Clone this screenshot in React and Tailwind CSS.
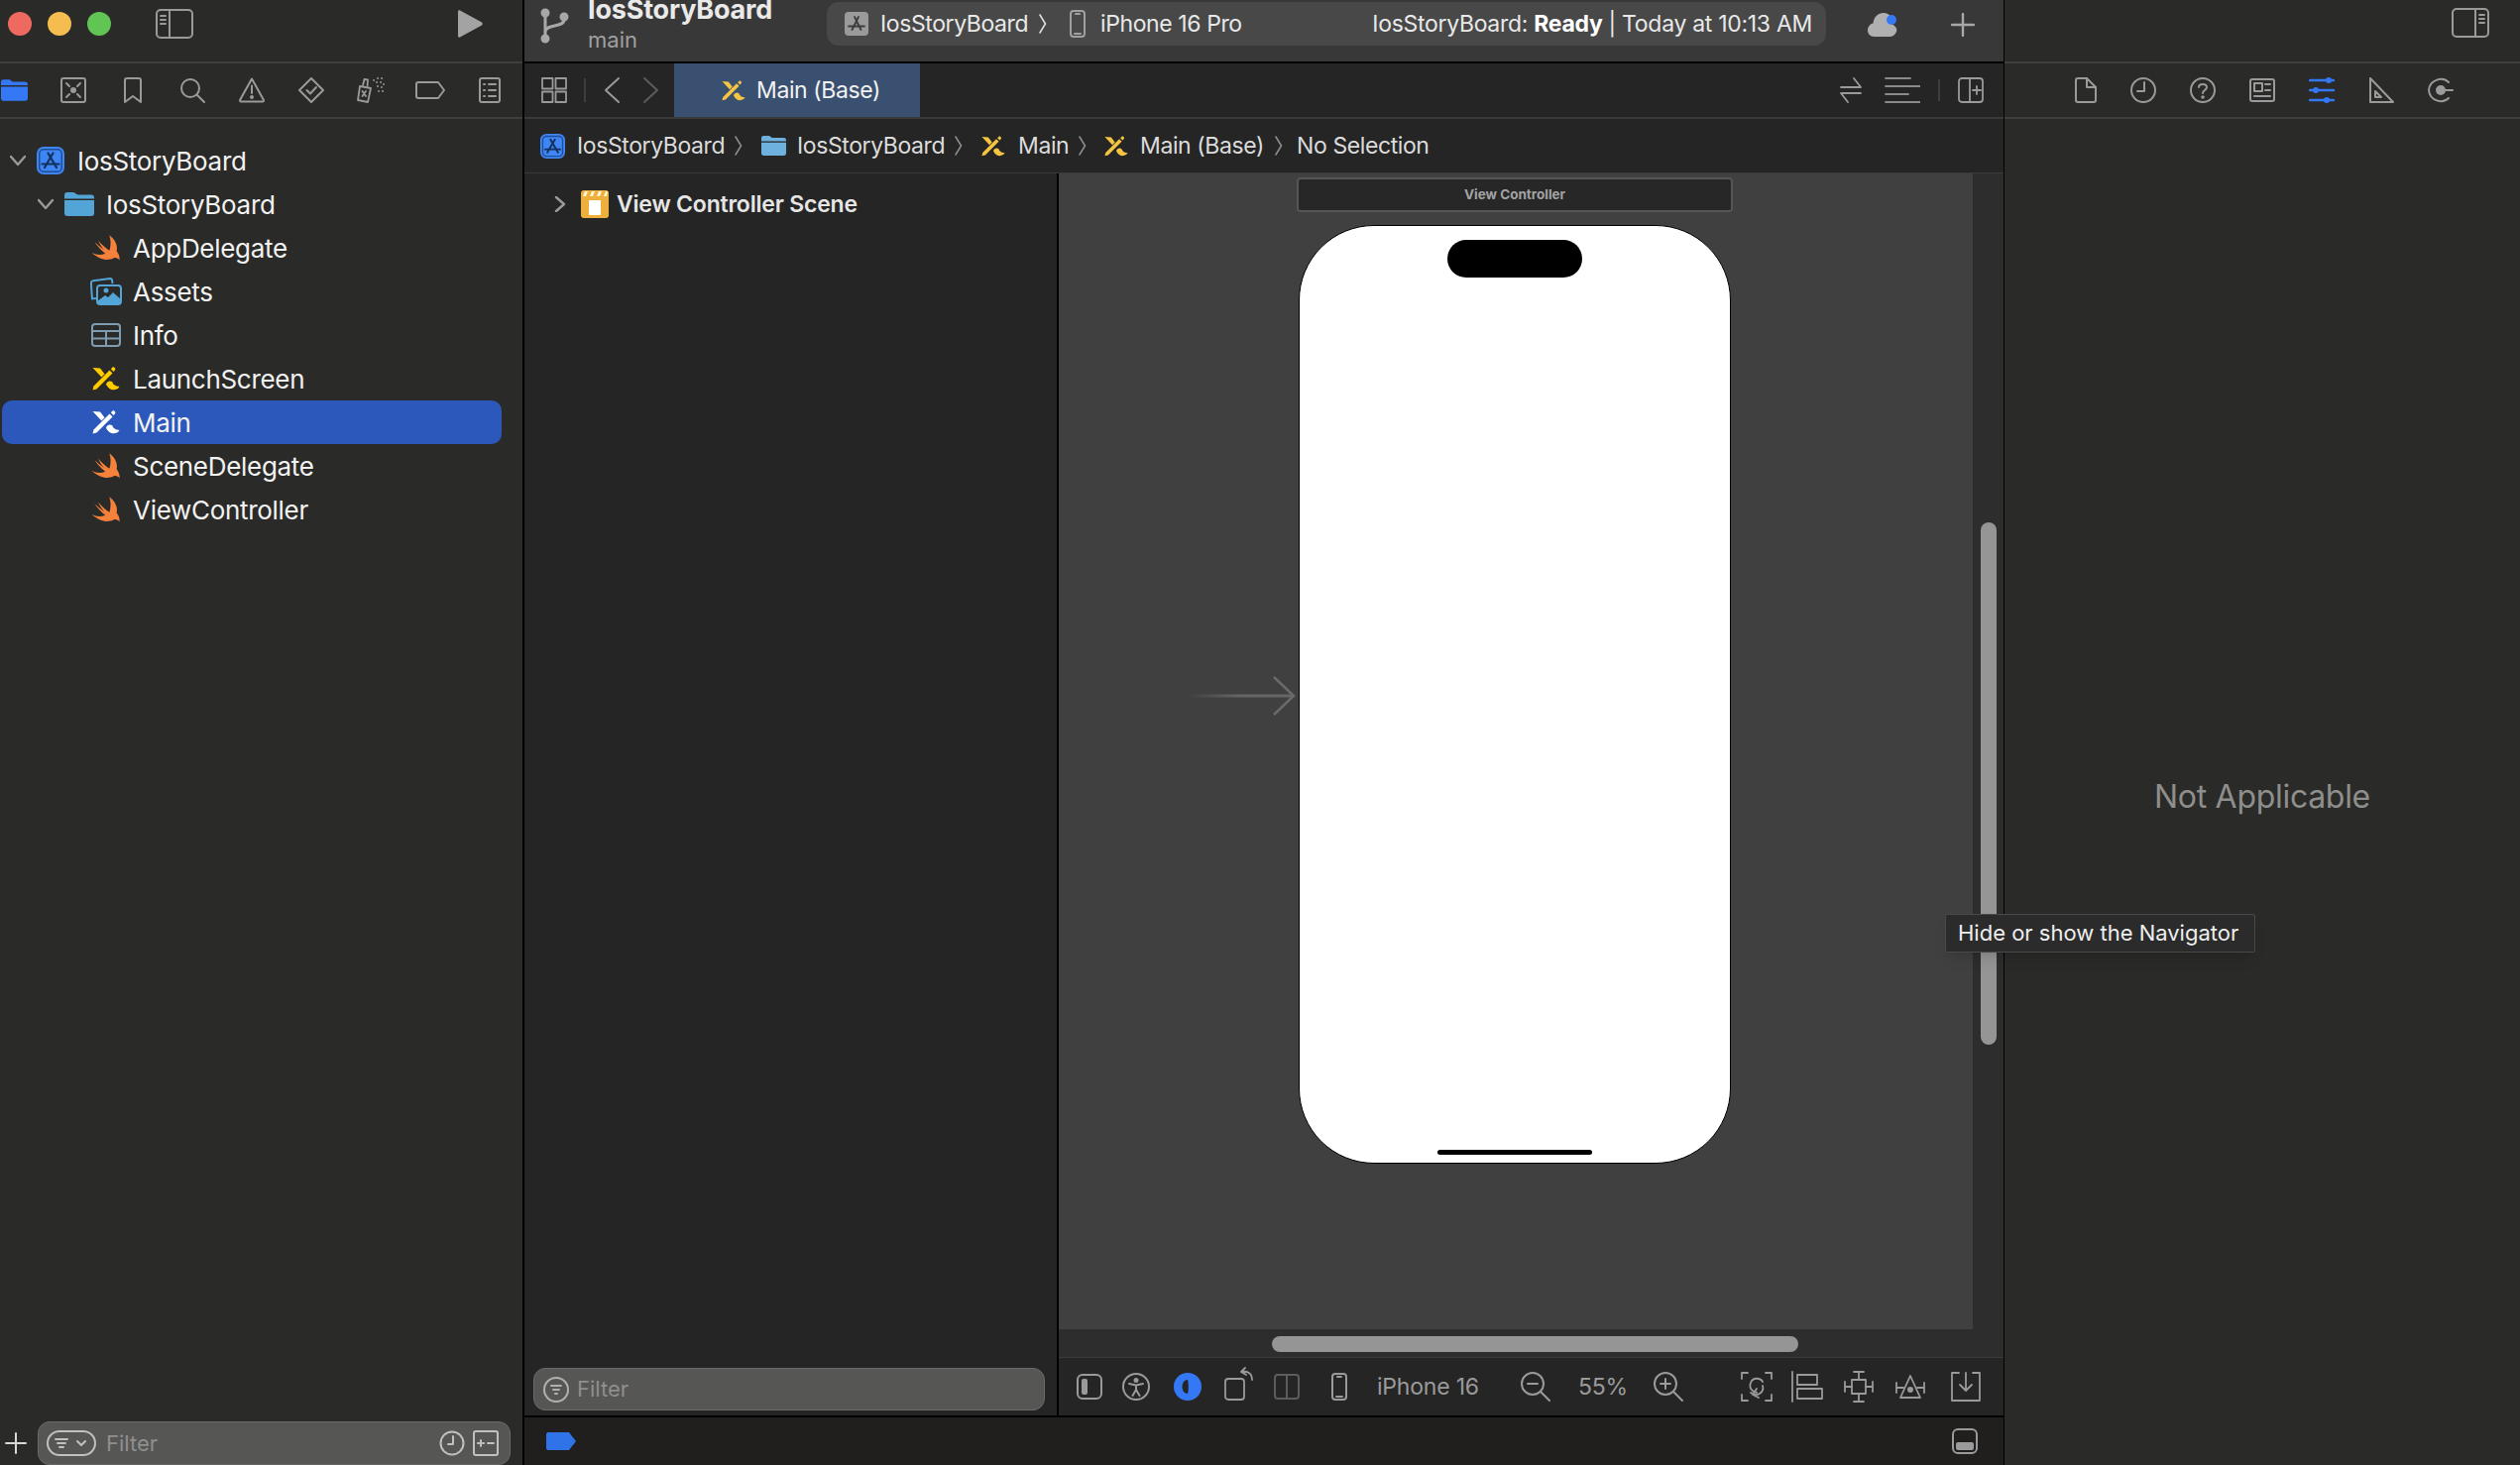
import React from 'react';

// Generic outline icon: drawn in real pixels, so viewBox equals the size
function Ic({ w = 28, h = 28, sw = 2, className = '', children }) {
  return (
    <svg width={w} height={h} viewBox={`0 0 ${w} ${h}`} fill="none" stroke="currentColor" strokeWidth={sw} strokeLinecap="round" strokeLinejoin="round" className={`shrink-0 ${className || 'text-[#9a9a9a]'}`}>
      {children}
    </svg>
  );
}

function Swift() {
  return (
    <svg width="30" height="26" viewBox="0 0 25 22" className="shrink-0" fill="#f5813a">
      <path d="M15.2 0.3C20.4 4 22.6 9.4 21.5 13.8C23.4 16.400 24.400 19 23.900 21.500C22.600 19.800 20.600 19 18.800 19.900C13.600 22.400 7 21.200 0.300 15.200C4 17 8.200 17.500 11.800 15.800C8 13 4.800 9.400 2.600 6C5.800 9 8.800 11.400 11 12.800C9 10.600 7.200 8 5.600 4.600C9 8.400 12.600 11.600 15.400 13.400C16.600 9.600 16.800 4.800 15.2 0.3Z" />
    </svg>
  );
}

function Storyboard({ color = '#ffcc00', w = 28, h = 24 }) {
  return (
    <svg width={w} height={h} viewBox="0 0 28 24" className="shrink-0" fill={color}>
      <path d="M0.500 1L8 1.500L12.500 7.300L9.400 10.600Z" />
      <path d="M0.500 23.500L1.500 19.500L17.500 3.500L20.500 6.500L4.500 22.500Z" />
      <path d="M18.800 2.300L20.300 0.800C21 0.200 21.800 0.200 22.400 0.800L22.900 1.300C23.500 1.900 23.500 2.700 22.900 3.400L21.500 4.900Z" />
      <path d="M14 17.500C15 14.500 18 13.500 20.300 15.300C21 18 24 20 27.500 20C25 24.500 17 25 14 17.500Z" />
    </svg>
  );
}

function AppIcon({ size = 28 }) {
  return (
    <svg width={size} height={size} viewBox="0 0 28 28" className="shrink-0" fill="none">
      <rect x="1" y="1" width="26" height="26" rx="6" fill="#1f4d96" stroke="#3f86f5" strokeWidth="2" />
      <rect x="3.500" y="3.500" width="21" height="21" rx="3.500" fill="#3f86f5" />
      <path d="M11.500 6.500L20 21M16.500 6.500L8 21M5.500 17.500H22.500" stroke="#14305f" strokeWidth="2.200" strokeLinecap="round" />
    </svg>
  );
}

function Folder({ w = 30, h = 24, color = '#52a5d6' }) {
  return (
    <svg width={w} height={h} viewBox="0 0 30 24" className="shrink-0" fill={color}>
      <path d="M0 3C0 1 1 0 3 0H9C11 0 11.500 2.500 14 2.500H27C29 2.500 30 3.500 30 5.500V6.500H0Z" />
      <path d="M0 8H30V21C30 23 29 24 27 24H3C1 24 0 23 0 21Z" />
    </svg>
  );
}

function Chevron({ dir = 'down' }) {
  return (
    <Ic w={16} h={16} sw={2.400}>
      {dir === 'down' ? <path d="M1 4L8 12L15 4" /> : <path d="M4 1L12 8L4 15" />}
    </Ic>
  );
}

function Crumb({ color = '#8c8c8c' }) {
  return (
    <svg width="8" height="20" viewBox="0 0 8 20" fill="none" stroke={color} strokeWidth="1.600" strokeLinecap="round" className="shrink-0">
      <path d="M1 1L6.500 10L1 19" />
    </svg>
  );
}

const files = [
  { name: 'AppDelegate', icon: <Swift /> },
  {
    name: 'Assets',
    icon: (
      <svg width="32" height="28" viewBox="0 0 32 28" className="shrink-0 -ml-[1px]" fill="none" stroke="#52a5d6" strokeWidth="2">
        <path d="M6 21L2 21.500C1.500 15 1 10 1 5C1 4 2 3.400 3 3.200L20 1C21.500 1 22 2 22 3L22.600 6" />
        <rect x="7" y="8" width="24" height="19" rx="3" />
        <circle cx="16" cy="13" r="2.500" fill="#52a5d6" stroke="none" />
        <path d="M7 24L15 18L18 20L23 15L31 22V25C31 26 30 27 29 27H10C8 27 7 26 7 24Z" fill="#52a5d6" stroke="none" />
      </svg>
    ),
  },
  {
    name: 'Info',
    icon: (
      <svg width="30" height="24" viewBox="0 0 30 24" className="shrink-0" fill="none" stroke="#7f9bb0" strokeWidth="2">
        <rect x="1" y="1" width="28" height="22" rx="3" />
        <path d="M1 8H29M1 15.500H29M15 8V23" />
      </svg>
    ),
  },
  { name: 'LaunchScreen', icon: <Storyboard /> },
  { name: 'Main', icon: <Storyboard color="#ffffff" />, selected: true },
  { name: 'SceneDelegate', icon: <Swift /> },
  { name: 'ViewController', icon: <Swift /> },
];

function Filter({ children, className }) {
  return <div className={`bg-[#565654] border border-[#6a6a68] flex items-center ${className}`}>{children}</div>;
}

const navIcons = [
  <Folder w={27} h={22} color="#3478f6" />,
  <Ic w={26} h={26}>
    <rect x="1" y="1" width="24" height="24" rx="2" />
    <circle cx="13" cy="13" r="3" fill="currentColor" stroke="none" />
    <path d="M6 6L9 9M20 6L17 9M6 20L9 17M20 20L17 17" />
  </Ic>,
  <Ic w={20} h={26}>
    <path d="M2 3C2 2 3 1 4 1H16C17 1 18 2 18 3V25L10 19L2 25Z" />
  </Ic>,
  <Ic w={26} h={26}>
    <circle cx="11" cy="11" r="9" />
    <path d="M17.500 17.500L25 25" />
  </Ic>,
  <Ic w={26} h={26}>
    <path d="M13 1.500L25 23C25 24 24.500 24.500 24 24.500H2C1.500 24.500 1 24 1 23Z" />
    <path d="M13 8.500V16" />
    <circle cx="13" cy="20" r="1" fill="currentColor" />
  </Ic>,
  <Ic w={28} h={28}>
    <path d="M14 2L26 14L14 26L2 14Z" />
    <path d="M9.500 14L13 17.500L19 11" />
  </Ic>,
  <Ic w={30} h={28} sw={1.800}>
    <path d="M4 10L15 12L12 26L2 24Z" />
    <path d="M7 9L8.500 3L12 3.500L11.500 10" />
    <path d="M6.500 15L10 20M10 15L6.500 20" />
    <path d="M18 4H18.100M22 2H22.100M26 2H26.100M21 6H21.100M25 6H25.100M28 8H28.100M22 10H22.100M26 11H26.100M23 15H23.100M27 15H27.100" />
  </Ic>,
  <Ic w={30} h={20}>
    <path d="M3 2H23L29 10L23 18H3C2 18 1 17 1 16V4C1 3 2 2 3 2Z" />
  </Ic>,
  <Ic w={22} h={26}>
    <rect x="1" y="1" width="20" height="24" rx="2" />
    <path d="M5 7H6M10 7H17M5 13H6M10 13H17M5 19H6M10 19H17" />
  </Ic>,
];

export default function App() {
  return (
    <div className="relative w-[2542px] h-[1478px] overflow-hidden flex bg-black font-[Inter,sans-serif] text-[25px] text-[#e6e6e6]">
      {/* Navigator */}
      <div className="w-[527px] shrink-0 mr-[2px] bg-[#2a2a28] flex flex-col">
        <div className="h-[62px] flex items-center pl-[8px] pr-[40px] shrink-0">
          <div className="flex gap-[16px]">
            <div className="w-6 h-6 rounded-full bg-[#ee6a5f] -mt-[14px]" />
            <div className="w-6 h-6 rounded-full bg-[#f5bd4f] -mt-[14px]" />
            <div className="w-6 h-6 rounded-full bg-[#61c554] -mt-[14px]" />
          </div>
          <div className="ml-[45px] -mt-[15px]">
            <Ic w={38} h={30}>
              <rect x="1" y="1" width="36" height="28" rx="4" />
              <path d="M14 1V29M5 7H10M5 11H10M5 15H10" />
            </Ic>
          </div>
          <svg width="26" height="28" viewBox="0 0 26 28" fill="#a3a3a3" className="ml-auto -mt-[14px]">
            <path d="M1 1.500C1 0.500 2 0 3 0.500L25 12.500C26 13.500 26 14.500 25 15.500L3 27.500C2 28 1 27.500 1 26.500Z" />
          </svg>
        </div>
        <div className="h-[2px] bg-[#3f3f3d] shrink-0" />
        <div className="h-[54px] flex items-center -ml-[16px] shrink-0">
          {navIcons.map((icon, i) => (
            <div key={i} className="w-[60px] flex justify-center shrink-0">{icon}</div>
          ))}
        </div>
        <div className="h-[2px] bg-[#3f3f3d] shrink-0" />
        <div className="flex-1 pt-[20px] text-[#f2f2f2] text-[26px] tracking-[-0.3px]">
          <div className="h-[44px] flex items-center pl-[10px]">
            <Chevron />
            <div className="ml-[11px] mr-[13px]"><AppIcon /></div>
            IosStoryBoard
          </div>
          <div className="h-[44px] flex items-center pl-[38px]">
            <Chevron />
            <div className="ml-[11px] mr-[12px]"><Folder /></div>
            IosStoryBoard
          </div>
          {files.map((f) => (
            <div key={f.name} className={`h-[44px] flex items-center pl-[90px] w-[504px] ml-[2px] rounded-[10px] ${f.selected ? 'bg-[#2c58bb]' : ''}`}>
              <div className="w-[30px] mr-[12px] flex justify-center">{f.icon}</div>
              {f.name}
            </div>
          ))}
        </div>
        <div className="h-[44px] flex items-center shrink-0">
          <Ic w={22} h={22} className="text-[#d8d8d8] ml-[5px]">
            <path d="M11 1V21M1 11H21" />
          </Ic>
          <Filter className="ml-[11px] w-[477px] h-[44px] rounded-[12px] text-[22px]">
            <div className="ml-[8px]">
              <Ic w={52} h={26} className="text-[#c0c0c0]">
                <rect x="1" y="1" width="48" height="24" rx="12" />
                <path d="M9 9H21M11 13H19M13 17H17M31 11L35 15L39 11" />
              </Ic>
            </div>
            <span className="ml-[8px] text-[#8f8f8d]">Filter</span>
            <div className="ml-auto mr-[11px] flex gap-[8px] items-center">
              <Ic w={26} h={26} className="text-[#c0c0c0]">
                <circle cx="13" cy="13" r="11.500" />
                <path d="M14 6V14H9" />
              </Ic>
              <Ic w={26} h={26} className="text-[#c0c0c0]">
                <rect x="1" y="1" width="24" height="24" rx="2" />
                <path d="M5 13H11M8 10V16M15 13H21" />
              </Ic>
            </div>
          </Filter>
        </div>
      </div>

      {/* Editor column */}
      <div className="w-[1492px] shrink-0 mr-[1px] flex flex-col">
        <div className="h-[62px] bg-[#383838] flex items-start shrink-0">
          <div className="ml-[16px] mt-[8px]">
            <Ic w={30} h={36} sw={3} className="text-[#a8a8a8]">
              <circle cx="5" cy="5" r="3" fill="currentColor" />
              <circle cx="5" cy="31" r="3" fill="currentColor" />
              <circle cx="24" cy="9" r="3" fill="currentColor" />
              <path d="M5 8V28M5 24C5 16 24 20 24 12" />
            </Ic>
          </div>
          <div className="ml-[18px] w-[241px] -mt-[8px] leading-none">
            <div className="text-[27px] font-bold text-[#eaeaea] h-[36px] leading-[36px] tracking-[-0.2px]">IosStoryBoard</div>
            <div className="text-[22px] text-[#a0a0a0] leading-[28px] -mt-[2px]">main</div>
          </div>
          <div className="mt-[2px] w-[1008px] h-[44px] rounded-[12px] bg-[#484848] flex items-center pl-[18px] pr-[14px] text-[23px] text-[#e8e8e8] tracking-[-0.4px]">
            <svg width="24" height="24" viewBox="0 0 24 24" fill="none" className="shrink-0">
              <rect width="24" height="24" rx="4" fill="#9a9a9a" />
              <path d="M10 5L16.500 18M14 5L7.500 18M4 14.500H20" stroke="#3c3c3c" strokeWidth="1.800" strokeLinecap="round" />
            </svg>
            <span className="ml-[12px] w-[147px] whitespace-nowrap">IosStoryBoard</span>
            <span className="ml-[13px]"><Crumb color="#dddddd" /></span>
            <Ic w={16} h={28} className="ml-[23px] text-[#a0a0a0]">
              <rect x="1" y="1" width="14" height="26" rx="3" />
              <path d="M5 24H11M6 4H10" />
            </Ic>
            <span className="ml-[15px]">iPhone 16 Pro</span>
            <span className="ml-auto tracking-[-0.3px]">IosStoryBoard: <b className="font-bold text-white">Ready</b> | Today at 10:13 AM</span>
          </div>
          <div className="ml-[41px] mt-[10px]">
            <svg width="32" height="30" viewBox="0 0 32 30">
              <path d="M8 27C3 27 1 23.500 1 20.500C1 17 3.500 14 6.500 13.500C7 7 12 3 17 3C20 3 23 4.500 24 7C21 9 22 14 26 14.500C30 17 31 20 30 22C29 25 26 27 23 27Z" fill="#b0b0b0" />
              <circle cx="25" cy="10" r="5" fill="#3478f6" />
            </svg>
          </div>
          <div className="ml-[53px] mt-[13px]">
            <Ic w={24} h={24} sw={2.400} className="text-[#a8a8a8]"><path d="M12 1V23M1 12H23" /></Ic>
          </div>
        </div>
        <div className="h-[2px] bg-black shrink-0" />

        {/* Tab bar */}
        <div className="h-[54px] bg-[#252525] flex items-center shrink-0">
          <div className="ml-[17px]">
            <Ic w={26} h={26} sw={1.800}>
              <rect x="1" y="1" width="10.500" height="10.500" />
              <rect x="14.500" y="1" width="10.500" height="10.500" />
              <rect x="1" y="14.500" width="10.500" height="10.500" />
              <rect x="14.500" y="14.500" width="10.500" height="10.500" />
            </Ic>
          </div>
          <div className="w-[2px] h-[24px] bg-[#3e3e3e] ml-[17px]" />
          <div className="ml-[17px]"><Ic w={18} h={28}><path d="M16 2L3 14L16 26" /></Ic></div>
          <div className="ml-[22px]"><Ic w={18} h={28} className="text-[#5c5c5c]"><path d="M2 2L15 14L2 26" /></Ic></div>
          <div className="ml-[14px] w-[248px] h-[54px] bg-[#3a5070] flex items-center pl-[48px] gap-[11px] text-[23px] text-[#f2f2f2] tracking-[-0.4px]">
            <Storyboard color="#f5c542" w={24} h={21} />
            Main (Base)
          </div>
          <div className="ml-auto flex items-center mr-[20px]">
            <Ic w={24} h={28} sw={1.800}>
              <path d="M2 11H22L15 2M22 17H2L9 26" />
            </Ic>
            <Ic w={36} h={26} sw={1.800} className="ml-[22px] text-[#8a8a8a]">
              <path d="M1 1H26M1 9H36M1 17H24M1 25H36" />
            </Ic>
            <div className="w-[2px] h-[22px] bg-[#3e3e3e] ml-[18px]" />
            <Ic w={26} h={26} sw={1.800} className="ml-[18px] text-[#9a9a9a]">
              <rect x="1" y="1" width="24" height="24" rx="3" />
              <path d="M12 1V25M15 13H23M19 9V17" />
            </Ic>
          </div>
        </div>
        <div className="h-[2px] bg-[#3a3a3a] shrink-0" />

        {/* Jump bar */}
        <div className="h-[54px] bg-[#252525] flex items-center pl-[16px] text-[23px] text-[#dcdcdc] tracking-[-0.4px] whitespace-nowrap shrink-0">
          <AppIcon size={25} />
          <span className="ml-[12px] w-[148px]">IosStoryBoard</span>
          <span className="ml-[11px]"><Crumb /></span>
          <span className="ml-[19px]"><Folder w={25} h={20} color="#6eb0de" /></span>
          <span className="ml-[11px] w-[147px]">IosStoryBoard</span>
          <span className="ml-[12px]"><Crumb /></span>
          <span className="ml-[19px]"><Storyboard color="#f5c542" w={24} h={21} /></span>
          <span className="ml-[13px] w-[48px]">Main</span>
          <span className="ml-[13px]"><Crumb /></span>
          <span className="ml-[18px]"><Storyboard color="#f5c542" w={24} h={21} /></span>
          <span className="ml-[12px] w-[122px]">Main (Base)</span>
          <span className="ml-[14px]"><Crumb /></span>
          <span className="ml-[14px]">No Selection</span>
        </div>
        <div className="h-[1px] bg-[#3a3a3a] shrink-0" />

        <div className="flex-1 flex min-h-0">
          {/* Outline */}
          <div className="w-[537px] mr-[2px] shrink-0 bg-[#252525] flex flex-col">
            <div className="mt-[9px] h-[44px] flex items-center pl-[28px] text-[23px] font-semibold text-[#e6e6e6] tracking-[-0.2px]">
              <Chevron dir="right" />
              <svg width="28" height="28" viewBox="0 0 28 28" className="ml-[13px] mr-[8px] shrink-0">
                <rect width="28" height="28" rx="3" fill="#eeb03c" />
                <path d="M4 1L2 6H5L7 1ZM11 1L9 6H12L14 1ZM18 1L16 6H19L21 1ZM25 1L23 6H26L27 1Z" fill="#fff5d8" />
                <rect x="8" y="10" width="12" height="15" rx="1" fill="#ffffff" />
              </svg>
              View Controller Scene
            </div>
            <Filter className="mt-auto mb-[5px] ml-[9px] w-[516px] h-[43px] rounded-[12px] text-[22px]">
              <div className="ml-[9px]">
                <Ic w={26} h={26} className="text-[#b0b0b0]">
                  <circle cx="13" cy="13" r="12" />
                  <path d="M8 9H18M10 13H16M12 17H14" />
                </Ic>
              </div>
              <span className="ml-[8px] text-[#8f8f8d]">Filter</span>
            </Filter>
          </div>

          <div className="flex-1 flex flex-col min-w-0">
            <div className="flex-1 flex min-h-0">
              {/* Canvas */}
              <div className="relative w-[922px] bg-[#404040] flex flex-col items-center pt-[4px]">
                <div className="w-[440px] h-[35px] -ml-[2px] rounded-[4px] bg-[#272727] border-2 border-[#555555] flex items-center justify-center text-[13.5px] font-bold text-[#a3a3a3]">
                  View Controller
                </div>
                <div className="mt-[13px] -ml-[2px] w-[436px] h-[947px] rounded-[76px] bg-white border border-black flex flex-col items-center">
                  <div className="mt-[14px] w-[136px] h-[38px] rounded-[19px] bg-black" />
                  <div className="mt-auto mb-[8px] w-[156px] h-[5px] rounded-full bg-black" />
                </div>
                <svg width="110" height="40" viewBox="0 0 110 40" fill="none" className="absolute left-[130px] top-[507px]">
                  <defs>
                    <linearGradient id="entry" x1="0" x2="1" y1="0" y2="0">
                      <stop offset="0" stopColor="#666666" stopOpacity="0" />
                      <stop offset="0.5" stopColor="#666666" />
                    </linearGradient>
                  </defs>
                  <rect x="0" y="18.500" width="107" height="3" fill="url(#entry)" />
                  <path d="M87 1L107 20L87 39" stroke="#6a6a6a" strokeWidth="2.500" />
                </svg>
              </div>
              {/* Vertical scroller */}
              <div className="flex-1 bg-[#2d2d2d] pl-[8px] pt-[352px]">
                <div className="w-[16px] h-[527px] rounded-full bg-[#959595]" />
              </div>
            </div>
            <div className="h-[28px] bg-[#2d2d2d] pl-[215px] pt-[7px] shrink-0">
              <div className="w-[531px] h-[16px] rounded-full bg-[#959595]" />
            </div>
            <div className="h-[1px] bg-[#3a3a3a] shrink-0" />
            <div className="h-[58px] bg-[#252525] flex items-center text-[#9a9a9a] text-[23px] tracking-[-0.2px] whitespace-nowrap shrink-0">
              <div className="ml-[18px]">
                <Ic w={26} h={26}>
                  <rect x="1" y="1" width="24" height="24" rx="5" />
                  <rect x="5" y="5" width="6" height="16" rx="2" fill="currentColor" stroke="none" />
                </Ic>
              </div>
              <div className="ml-[20px]">
                <Ic w={28} h={28}>
                  <circle cx="14" cy="14" r="13" />
                  <circle cx="14" cy="7.500" r="1.500" fill="currentColor" />
                  <path d="M7 11L14 12.500L21 11M14 12.500V17M14 17L10.500 23M14 17L17.500 23" />
                </Ic>
              </div>
              <div className="ml-[24px]">
                <svg width="28" height="28" viewBox="0 0 28 28">
                  <circle cx="14" cy="14" r="14" fill="#3478f6" />
                  <path d="M14 7C10 7 8.500 11 8.500 14C8.500 17 10 21 14 21C15 18 15 10 14 7Z" fill="#252525" />
                </svg>
              </div>
              <div className="ml-[23px] -mt-[6px]">
                <Ic w={30} h={34} sw={1.800}>
                  <rect x="1" y="12" width="19" height="21" rx="3" />
                  <path d="M21 1L17 5L22 8M17 5C23 4 28 6 28 13" />
                </Ic>
              </div>
              <div className="ml-[20px]">
                <Ic w={26} h={26} className="text-[#5c5c5c]">
                  <rect x="1" y="1" width="24" height="24" rx="3" />
                  <path d="M13 1V25" />
                </Ic>
              </div>
              <div className="ml-[32px]">
                <Ic w={16} h={28}>
                  <rect x="1" y="1" width="14" height="26" rx="3" />
                  <path d="M5 24H11M6 4H10" />
                </Ic>
              </div>
              <span className="ml-[30px] w-[101px]">iPhone 16</span>
              <div className="ml-[44px]">
                <Ic w={30} h={30}>
                  <circle cx="12" cy="12" r="11" />
                  <path d="M7 12H17M20 20L29 29" />
                </Ic>
              </div>
              <span className="ml-[28px] w-[46px]">55%</span>
              <div className="ml-[30px]">
                <Ic w={30} h={30}>
                  <circle cx="12" cy="12" r="11" />
                  <path d="M7 12H17M12 7V17M20 20L29 29" />
                </Ic>
              </div>
              <div className="ml-[58px]">
                <Ic w={32} h={30} sw={1.800}>
                  <path d="M1 7V1H7M25 1H31V7M1 23V29H7M25 29H31V23" />
                  <path d="M22 10C20 6 12 5 10 11C8 16 11 20 16 21M10 21C16 26 24 21 22 14M16 17L12 23L18 26" />
                </Ic>
              </div>
              <div className="ml-[19px]">
                <Ic w={32} h={32} sw={1.800}>
                  <path d="M1 1V31" />
                  <rect x="6" y="4" width="20" height="10" />
                  <rect x="6" y="18" width="25" height="10" />
                </Ic>
              </div>
              <div className="ml-[21px]">
                <Ic w={30} h={32} sw={1.800}>
                  <rect x="8" y="9" width="14" height="14" />
                  <path d="M15 1V9M15 23V31M10 1H20M10 31H20M1 16H8M22 16H29M1 11V21M29 11V21" />
                </Ic>
              </div>
              <div className="ml-[22px]">
                <Ic w={30} h={26} sw={1.800}>
                  <path d="M15 2L25 24H5Z" />
                  <circle cx="15" cy="16" r="3" fill="currentColor" stroke="none" />
                  <path d="M1 14H8M22 14H29M1 9V19M29 9V19" />
                </Ic>
              </div>
              <div className="ml-[25px]">
                <Ic w={32} h={32} sw={1.800}>
                  <path d="M9 2H2V30H30V2H23M16 2V20M10 14L16 20L22 14" />
                </Ic>
              </div>
            </div>
          </div>
        </div>
        <div className="h-[2px] bg-black shrink-0" />

        {/* Debug bar */}
        <div className="h-[48px] bg-[#201f1d] flex items-center pl-[22px] pr-[26px] shrink-0">
          <svg width="30" height="18" viewBox="0 0 30 18" className="shrink-0">
            <path d="M2 0H23L30 9L23 18H2C1 18 0 17 0 16V2C0 1 1 0 2 0Z" fill="#3072e8" />
          </svg>
          <div className="ml-auto">
            <Ic w={26} h={26}>
              <rect x="1" y="1" width="24" height="24" rx="5" />
              <rect x="4" y="14" width="18" height="8" rx="2" fill="currentColor" stroke="none" />
            </Ic>
          </div>
        </div>
      </div>

      {/* Inspector */}
      <div className="flex-1 bg-[#2a2a28] flex flex-col">
        <div className="h-[62px] flex items-start justify-end pt-[8px] pr-[31px] shrink-0">
          <Ic w={38} h={30}>
            <rect x="1" y="1" width="36" height="28" rx="4" />
            <path d="M24 1V29M28 7H33M28 11H33M28 15H33" />
          </Ic>
        </div>
        <div className="h-[2px] bg-[#3f3f3d] shrink-0" />
        <div className="h-[54px] flex items-center justify-center gap-[34px] ml-[4px] shrink-0">
          <Ic w={22} h={26}>
            <path d="M3 1H12L21 10V23C21 24 20 25 19 25H3C2 25 1 24 1 23V3C1 2 2 1 3 1Z" />
            <path d="M12 1V10H21" />
          </Ic>
          <Ic w={26} h={26}>
            <circle cx="13" cy="13" r="12" />
            <path d="M14 5V14H7" />
          </Ic>
          <Ic w={26} h={26}>
            <circle cx="13" cy="13" r="12" />
            <path d="M9 10C9 6 17 6 17 10C17 13 13 13 13 16" />
            <circle cx="13" cy="20" r="0.800" fill="currentColor" />
          </Ic>
          <Ic w={26} h={24}>
            <rect x="1" y="1" width="24" height="22" rx="2" />
            <rect x="5" y="5" width="8" height="8" />
            <path d="M16 6H21M16 12H21M5 18H21" />
          </Ic>
          <Ic w={26} h={26} sw={2.400} className="text-[#3478f6]">
            <path d="M1 3H25M1 13H25M1 23H25" />
            <circle cx="20" cy="3" r="3" fill="currentColor" stroke="none" />
            <circle cx="7" cy="13" r="3" fill="currentColor" stroke="none" />
            <circle cx="18" cy="23" r="3" fill="currentColor" stroke="none" />
          </Ic>
          <Ic w={26} h={26}>
            <path d="M2 1V25H25Z" />
            <path d="M7 14V20H13Z" />
          </Ic>
          <Ic w={26} h={26}>
            <path d="M21 5C15 -1 2 2 1 13C2 24 15 27 21 21" />
            <circle cx="13" cy="13" r="5" fill="currentColor" stroke="none" />
            <path d="M13 13H25" />
          </Ic>
        </div>
        <div className="h-[2px] bg-[#3f3f3d] shrink-0" />
        <div className="flex-1 pt-[660px] text-center text-[32px] text-[#8e8e8c] -tracking-[0.3px]">Not Applicable</div>
      </div>

      {/* Tooltip */}
      <div className="absolute left-[1962px] top-[922px] w-[313px] h-[39px] bg-[#2b2b2b] border border-[#4a4a4a] rounded-[2px] shadow-lg flex items-center pl-[12px] text-[22px] text-[#eeeeee] whitespace-nowrap">
        Hide or show the Navigator
      </div>
    </div>
  );
}
